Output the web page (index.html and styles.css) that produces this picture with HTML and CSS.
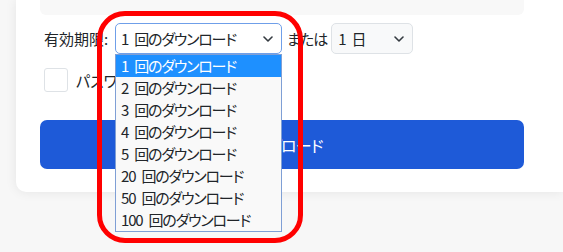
FILE: index.html
```html
<!DOCTYPE html>
<html lang="ja">
<head>
  <meta charset="UTF-8" />
  <meta name="viewport" content="width=device-width, initial-scale=1.0"/>
  <title>アップロード</title>
  <link rel="stylesheet" href="styles.css">
</head>
<body>
  <div class="card">
    <div class="file-list"></div>

    <div class="expiry-row">
      <span class="expiry-label">有効期限:</span>
      <div class="select-wrap">
        <div class="fake-select focused">
          <span>1 回のダウンロード</span>
          <svg class="chevron" width="10" height="6" viewBox="0 0 10 6"><path d="M1 1l4 4 4-4" fill="none" stroke="#343a40" stroke-width="1.6" stroke-linecap="round" stroke-linejoin="round"/></svg>
        </div>
        <ul class="dropdown">
          <li class="active">1 回のダウンロード</li>
          <li>2 回のダウンロード</li>
          <li>3 回のダウンロード</li>
          <li>4 回のダウンロード</li>
          <li>5 回のダウンロード</li>
          <li>20 回のダウンロード</li>
          <li>50 回のダウンロード</li>
          <li>100 回のダウンロード</li>
        </ul>
      </div>
      <span class="or-label">または</span>
      <div class="fake-select small">
        <span>1 日</span>
        <svg class="chevron" width="10" height="6" viewBox="0 0 10 6"><path d="M1 1l4 4 4-4" fill="none" stroke="#343a40" stroke-width="1.6" stroke-linecap="round" stroke-linejoin="round"/></svg>
      </div>
    </div>

    <label class="password-row">
      <span class="checkbox"></span>
      <span>パスワードで保護する</span>
    </label>

    <button class="upload-btn">アップロード</button>
  </div>

  <div class="highlight"></div>
</body>
</html>
```

FILE: styles.css
```css
html, body {
  height: 100%;
  overflow: hidden;
}
body {
  margin: 0;
  background: #f7f7f7;
  font-family: "Noto Sans CJK JP", "Noto Sans", sans-serif;
  font-feature-settings: "palt";
  color: #212529;
  font-size: 15px;
  position: relative;
}
.card {
  position: relative;
  margin-left: 16px;
  background: #fff;
  border-radius: 0 0 0 10px;
  box-shadow: 0 0 12px rgba(0,0,0,0.08);
  padding: 0 24px 23px;
}
.file-list {
  width: 484px;
  height: 15px;
  background: #f8f8f8;
  border-radius: 0 0 6px 6px;
}
.expiry-row {
  display: flex;
  align-items: center;
  margin-top: 8px;
  padding-left: 4px;
  position: relative;
  z-index: 2;
}
.expiry-label {
  width: 68px;
  margin-right: 3px;
  white-space: nowrap;
}
.or-label {
  margin: 0 4px 0 5px;
  letter-spacing: -1px;
  white-space: nowrap;
}
.select-wrap {
  position: relative;
}
.fake-select {
  display: flex;
  align-items: center;
  justify-content: space-between;
  box-sizing: border-box;
  width: 167px;
  height: 31px;
  padding: 0 8px 0 5px;
  border: 1px solid #dee2e6;
  border-radius: 5px;
  background: #f8f9fa;
  letter-spacing: -1.2px;
  word-spacing: 4px;
}
.fake-select.focused {
  border-color: #6f9fe9;
  background: #fff;
}
.fake-select.small {
  width: 82px;
  padding-left: 6px;
}
.chevron {
  display: block;
}
.dropdown {
  position: absolute;
  top: 100%;
  left: 0;
  width: 167px;
  box-sizing: border-box;
  margin: 0;
  padding: 0;
  list-style: none;
  background: #f9f9f9;
  border: 1px solid #7f9fd5;
  letter-spacing: -1.2px;
  word-spacing: 4px;
}
.dropdown li {
  height: 22px;
  line-height: 22px;
  padding-left: 5px;
  white-space: nowrap;
}
.dropdown li.active {
  background: #1e90ff;
  color: #fff;
}
.password-row {
  display: flex;
  align-items: center;
  gap: 8px;
  margin-top: 14px;
  padding-left: 4px;
}
.checkbox {
  width: 24px;
  height: 24px;
  box-sizing: border-box;
  border: 1px solid #dee2e6;
  border-radius: 3px;
  background: #fff;
}
.upload-btn {
  display: block;
  width: 484px;
  height: 49px;
  margin-top: 28px;
  border: none;
  border-radius: 7px;
  background: #1e5ad8;
  color: #fff;
  font-family: inherit;
  font-feature-settings: "palt";
  font-size: 16px;
  letter-spacing: -0.8px;
}
.highlight {
  position: absolute;
  left: 97px;
  top: 11px;
  width: 206px;
  height: 232px;
  box-sizing: border-box;
  border: 5px solid #f00;
  border-radius: 28px;
  z-index: 3;
}
```
